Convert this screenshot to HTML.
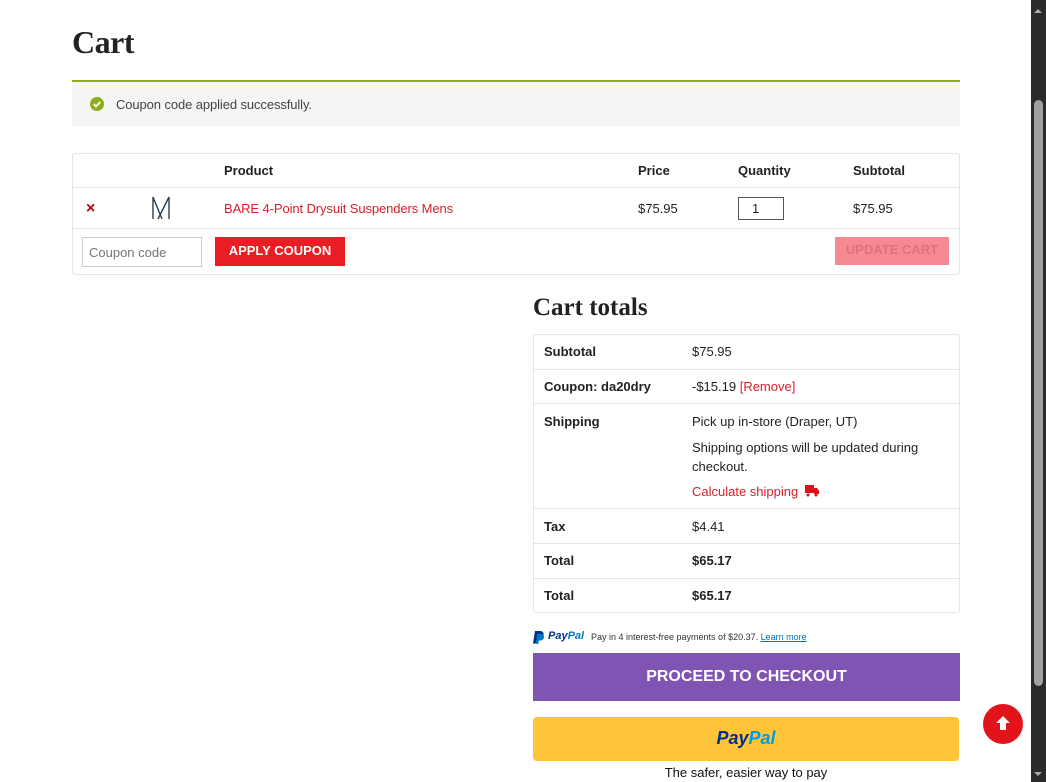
<!DOCTYPE html>
<html><head><meta charset="utf-8"><style>
*{box-sizing:border-box;margin:0;padding:0}
body{width:1046px;height:782px;overflow:hidden;background:#fff;font-family:"Liberation Sans",Arial,sans-serif;color:#222;position:relative;font-size:13px}
.a{position:absolute}
.red{color:#d6202a}
b{font-weight:bold}
.tt{border:1px solid #e5e5e5;border-radius:3px}
.hl{height:1px;background:#e5e5e5}
</style></head><body>
<div class="a" style="left:72px;top:24px;font-family:'Liberation Serif',serif;font-weight:bold;font-size:32px;color:#222;letter-spacing:-0.5px">Cart</div>
<div class="a" style="left:72px;top:80px;width:888px;height:46px;background:#f4f5f4;border-top:2px solid #8fae1b"></div>
<svg class="a" style="left:90px;top:97px" width="14" height="14"><circle cx="7" cy="7" r="7" fill="#8fae1b"/><path d="M3.8 7.2l2.2 2.2 4.2-4.4" stroke="#fff" stroke-width="1.8" fill="none"/></svg>
<div class="a" style="left:116px;top:97px;color:#444;letter-spacing:-0.1px">Coupon code applied successfully.</div>

<div class="a tt" style="left:72px;top:153px;width:888px;height:122px"></div>
<div class="a hl" style="left:73px;top:187px;width:886px"></div>
<div class="a hl" style="left:73px;top:228px;width:886px"></div>
<div class="a" style="left:224px;top:163px;font-weight:bold">Product</div>
<div class="a" style="left:638px;top:163px;font-weight:bold">Price</div>
<div class="a" style="left:738px;top:163px;font-weight:bold">Quantity</div>
<div class="a" style="left:853px;top:163px;font-weight:bold">Subtotal</div>
<div class="a" style="left:86px;top:200px;color:#b00;font-weight:bold;font-size:16px;line-height:18px">×</div>
<svg class="a" style="left:150px;top:195px" width="22" height="28"><path d="M3 2v22M19 2v22M3 2l9 22M19 2L8 24" stroke="#2a3e50" stroke-width="1.4" fill="none"/></svg>
<div class="a red" style="left:224px;top:201px;letter-spacing:-0.1px">BARE 4-Point Drysuit Suspenders Mens</div>
<div class="a" style="left:638px;top:201px">$75.95</div>
<div class="a" style="left:738px;top:197px;width:46px;height:23px;border:1px solid #555;padding:3px 0 0 13px">1</div>
<div class="a" style="left:853px;top:201px">$75.95</div>
<div class="a" style="left:82px;top:237px;width:120px;height:30px;border:1px solid #ccc;color:#777;padding:7px 6px">Coupon code</div>
<div class="a" style="left:215px;top:237px;width:130px;height:29px;background:#ea1c24;color:#fff;font-weight:bold;text-align:center;line-height:28px">APPLY COUPON</div>
<div class="a" style="left:835px;top:237px;width:114px;height:28px;background:#f58a92;color:#e0707a;font-weight:bold;text-align:center;line-height:26px">UPDATE CART</div>

<div class="a" style="left:533px;top:294px;font-family:'Liberation Serif',serif;font-weight:bold;font-size:25px">Cart totals</div>
<div class="a tt" style="left:533px;top:334px;width:427px;height:279px"></div>
<div class="a hl" style="left:534px;top:369px;width:425px"></div>
<div class="a hl" style="left:534px;top:403px;width:425px"></div>
<div class="a hl" style="left:534px;top:508px;width:425px"></div>
<div class="a hl" style="left:534px;top:543px;width:425px"></div>
<div class="a hl" style="left:534px;top:578px;width:425px"></div>
<div class="a" style="left:544px;top:344px;font-weight:bold">Subtotal</div>
<div class="a" style="left:692px;top:344px">$75.95</div>
<div class="a" style="left:544px;top:379px;font-weight:bold">Coupon: da20dry</div>
<div class="a" style="left:692px;top:379px">-$15.19 <span class="red">[Remove]</span></div>
<div class="a" style="left:544px;top:414px;font-weight:bold">Shipping</div>
<div class="a" style="left:692px;top:414px">Pick up in-store (Draper, UT)</div>
<div class="a" style="left:692px;top:438px;width:250px;line-height:19px">Shipping options will be updated during checkout.</div>
<div class="a red" style="left:692px;top:484px">Calculate shipping</div>
<svg class="a" style="left:804px;top:484px" width="16" height="13"><rect x="1" y="1" width="9" height="8" fill="#e0101a"/><path d="M10 4h3l2 3v3h-5z" fill="#e0101a"/><circle cx="4" cy="11" r="1.5" fill="#e0101a"/><circle cx="12" cy="11" r="1.5" fill="#e0101a"/></svg>
<div class="a" style="left:544px;top:519px;font-weight:bold">Tax</div>
<div class="a" style="left:692px;top:519px">$4.41</div>
<div class="a" style="left:544px;top:553px;font-weight:bold">Total</div>
<div class="a" style="left:692px;top:553px;font-weight:bold">$65.17</div>
<div class="a" style="left:544px;top:588px;font-weight:bold">Total</div>
<div class="a" style="left:692px;top:588px;font-weight:bold">$65.17</div>

<svg class="a" style="left:533px;top:630px" width="12" height="14"><path d="M2 1h5c3 0 4 2 3.5 4-.5 2.5-2.5 3.5-5 3.5H4l-1 5H0z" fill="#003087"/><path d="M4 4h4c2.5 0 3.5 2 3 3.5-.5 2-2 3-4 3H6l-.8 3.5H3z" fill="#0079c1"/></svg>
<div class="a" style="left:548px;top:630px;font-size:11px;font-style:italic;font-weight:bold;color:#003087">Pay<span style="color:#0079c1">Pal</span></div>
<div class="a" style="left:591px;top:632px;font-size:9px;color:#333">Pay in 4 interest-free payments of $20.37. <span style="color:#0070ba;text-decoration:underline">Learn more</span></div>
<div class="a" style="left:533px;top:653px;width:427px;height:48px;background:#7f54b3;color:#fff;font-weight:bold;font-size:16px;text-align:center;line-height:47px">PROCEED TO CHECKOUT</div>
<div class="a" style="left:533px;top:717px;width:426px;height:44px;background:#ffc439;border-radius:4px;text-align:center;line-height:43px;font-style:italic;font-weight:bold;font-size:18px;color:#003087">Pay<span style="color:#009cde">Pal</span></div>
<div class="a" style="left:533px;top:765px;width:426px;text-align:center;font-size:13px;color:#111">The safer, easier way to pay</div>

<div class="a" style="left:983px;top:704px;width:40px;height:40px;border-radius:50%;background:#e3131b"></div>
<svg class="a" style="left:994px;top:714px" width="18" height="18"><path d="M9 2L2 9h4v7h6V9h4z" fill="#fff"/></svg>

<div class="a" style="left:1031px;top:0;width:15px;height:782px;background:#2b2b2b"></div>
<div class="a" style="left:1034px;top:100px;width:9px;height:586px;background:#a0a0a0;border-radius:5px"></div>
<div class="a" style="left:1034px;top:5px;width:0;height:0;border:4px solid transparent;border-bottom:4px solid #aaa"></div>
<div class="a" style="left:1034px;top:772px;width:0;height:0;border:4px solid transparent;border-top:4px solid #aaa"></div>
</body></html>
